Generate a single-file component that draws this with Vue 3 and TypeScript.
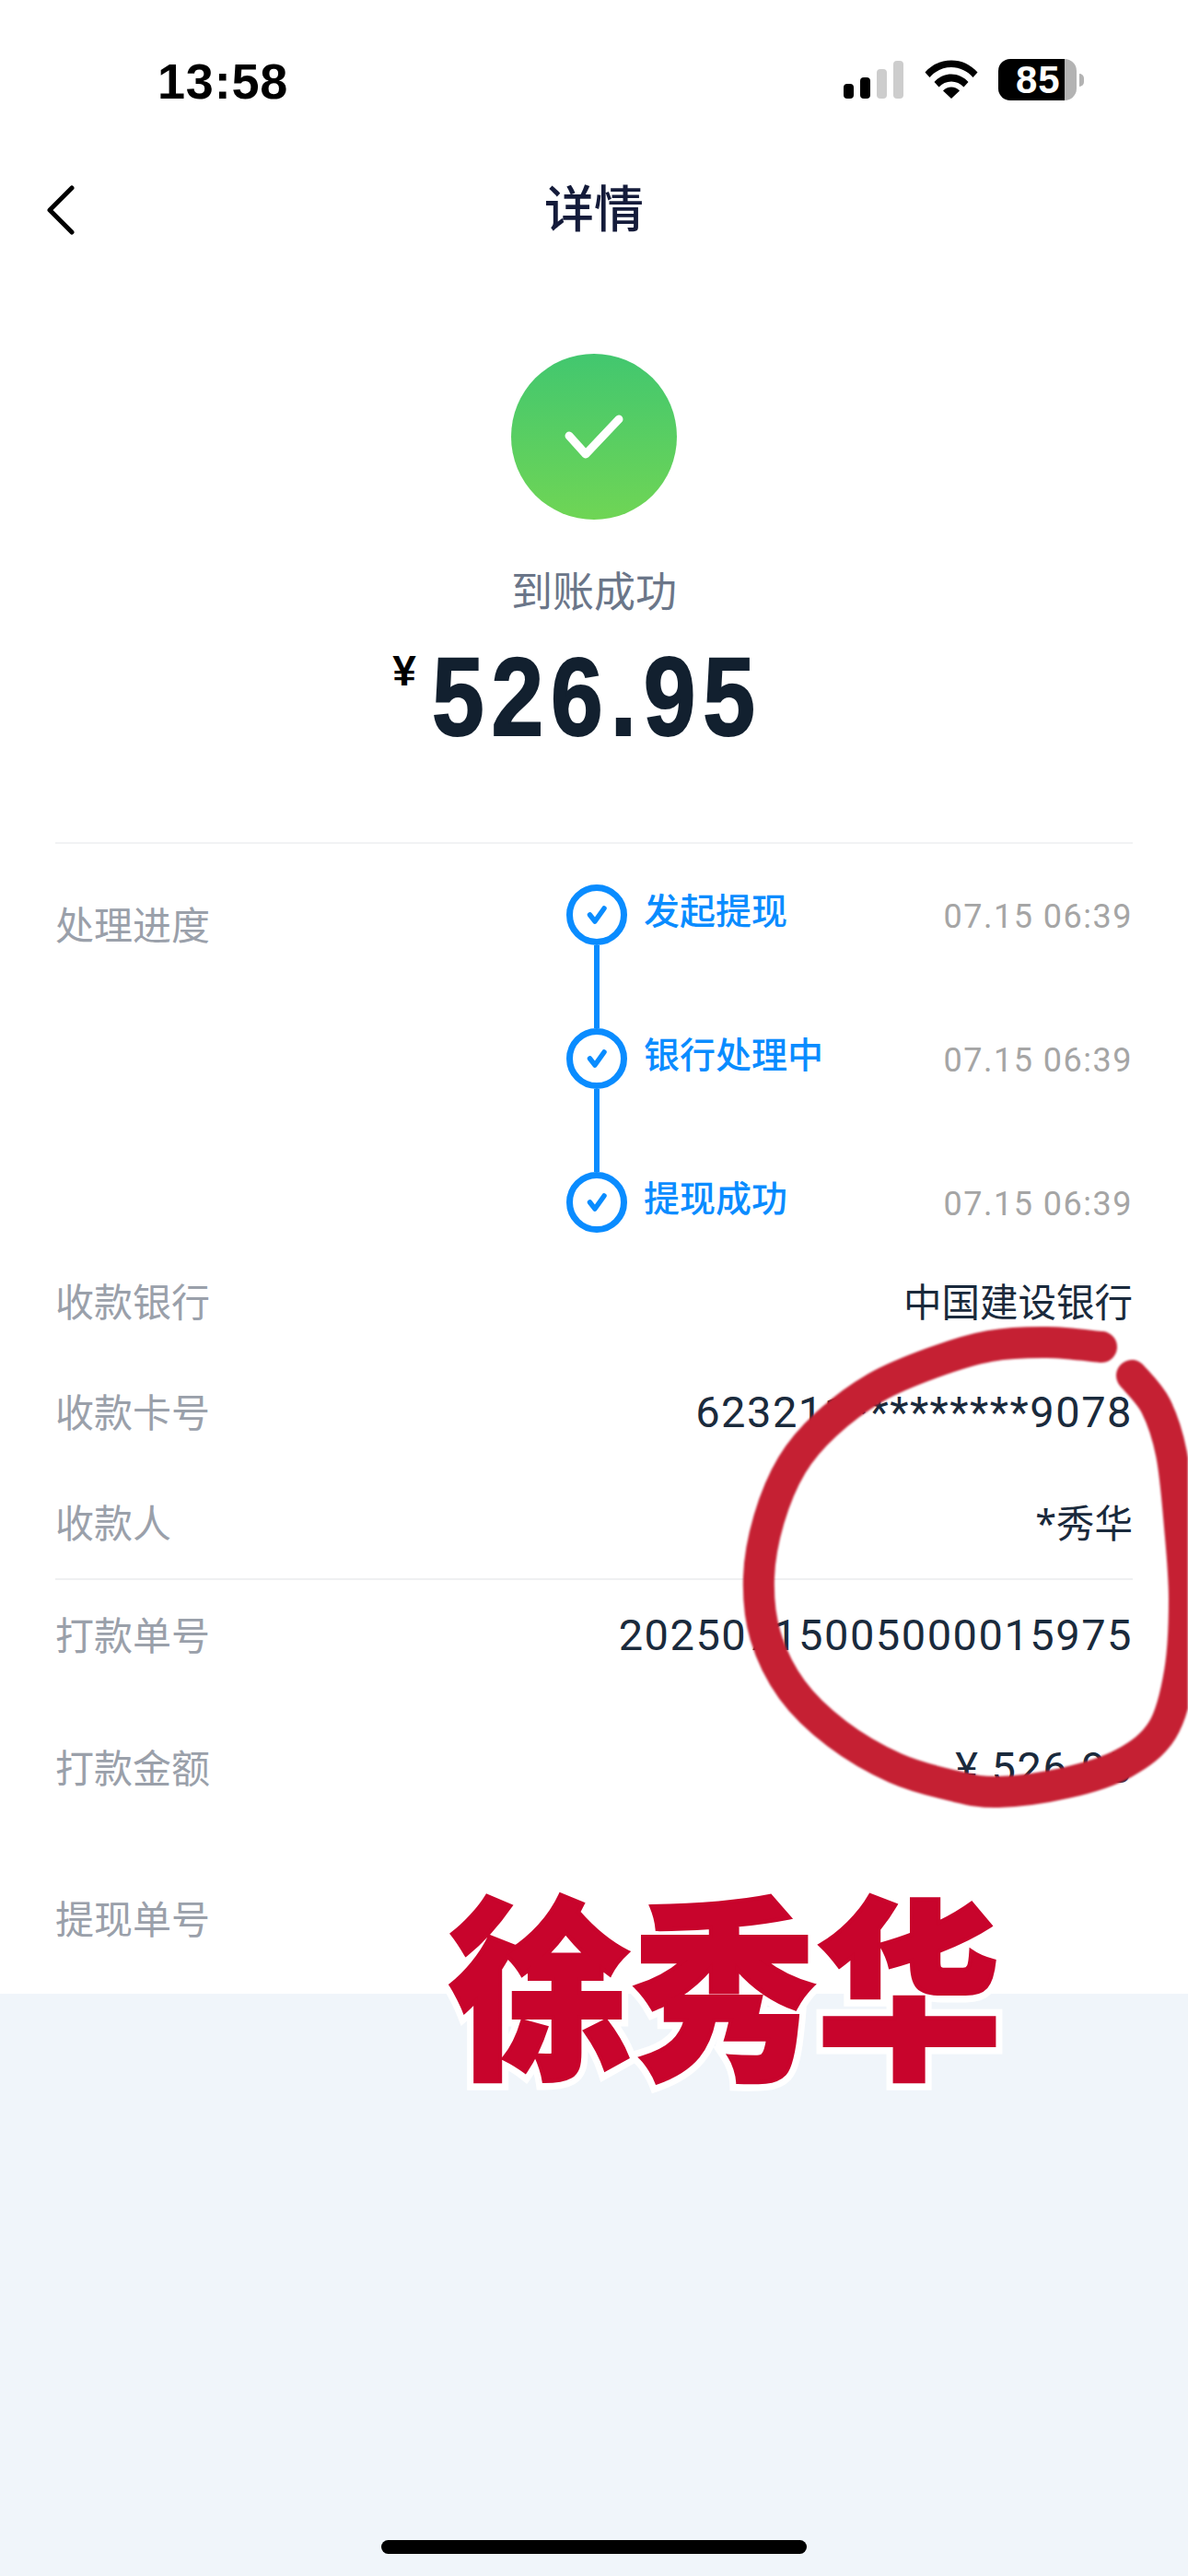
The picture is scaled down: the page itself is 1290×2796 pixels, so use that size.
<template>
  <div class="page">
    <div class="sheet">
      <!-- 状态栏 -->
      <div class="status-bar">
        <span class="clock">13:58</span>
        <div class="status-icons">
          <div class="signal">
            <i class="bar b1"></i>
            <i class="bar b2"></i>
            <i class="bar b3 off"></i>
            <i class="bar b4 off"></i>
          </div>
          <svg class="wifi" width="58" height="42" viewBox="0 0 58 42">
            <path d="M0.5 13.5C8 5 18 0.5 29 0.5S50 5 57.5 13.5L52.5 19C46.5 12 38 8 29 8S11.500 12 5.500 19Z" />
            <path d="M10.500 24C15.500 18.500 22 15.500 29 15.500S42.500 18.500 47.500 24L42.500 29.500C39 25.500 34 23.500 29 23.500S19 25.500 15.500 29.500Z" />
            <path d="M20 33.500C22.500 31 25.500 29.500 29 29.500S35.500 31 38 33.500L29 42Z" />
          </svg>
          <div class="battery">
            <div class="battery-body"><span>85</span></div>
            <i class="battery-tip"></i>
          </div>
        </div>
      </div>

      <!-- 导航 -->
      <div class="nav">
        <svg class="back" width="32" height="60" viewBox="0 0 32 60">
          <path d="M27 6 L3 30 L27 54" />
        </svg>
        <span class="nav-title">详情</span>
      </div>

      <!-- 金额 -->
      <div class="hero">
        <div class="ok-badge">
          <svg width="70" height="56" viewBox="0 0 70 56">
            <path d="M8 27 L26 47 L62 9" />
          </svg>
        </div>
        <p class="hero-state">到账成功</p>
        <div class="hero-amount">
          <span class="yen">¥</span>
          <span class="money">526.95</span>
        </div>
      </div>

      <div class="details">
        <div class="progress-row">
          <span class="label">处理进度</span>
          <div class="steps">
            <div v-for="(s, i) in steps" :key="s" class="step">
              <div class="step-mark">
                <svg width="66" height="66" viewBox="0 0 66 66">
                  <circle cx="33" cy="33" r="29.500" />
                  <path d="M25.500 33 L31 40 L41 26" />
                </svg>
                <i v-if="i < steps.length - 1" class="step-line"></i>
              </div>
              <span class="step-name">{{ s }}</span>
              <span class="step-time">07.15 06:39</span>
            </div>
          </div>
        </div>

        <div class="row r-bank">
          <span class="label">收款银行</span>
          <span class="value">中国建设银行</span>
        </div>
        <div class="row r-card">
          <span class="label">收款卡号</span>
          <span class="value num">623211*********9078</span>
        </div>
        <div class="row r-payee">
          <span class="label">收款人</span>
          <span class="value">*秀华</span>
        </div>
        <div class="row r-order">
          <span class="label">打款单号</span>
          <span class="value num">20250715005000015975</span>
        </div>
        <div class="row r-paid">
          <span class="label">打款金额</span>
          <span class="value num">¥ 526.95</span>
        </div>
        <div class="row r-draw">
          <span class="label">提现单号</span>
        </div>
      </div>
    </div>

    <div class="home-bar"></div>

    <!-- 截图上的红笔标注 -->
    <svg class="ink" width="1290" height="2796" viewBox="0 0 1290 2796">
      <path :d="inkPath" />
    </svg>
    <span class="stamp" data-text="徐秀华">徐秀华</span>
  </div>
</template>

<script setup lang="ts">
const steps: string[] = ['发起提现', '银行处理中', '提现成功']

// 红圈的中心线取点，再用 Catmull-Rom 连成平滑曲线
const inkPoints: [number, number][] = [
  [1196, 1462], [1137, 1457], [1075, 1461], [1013, 1479], [951, 1506], [897, 1546],
  [860, 1590], [835, 1649], [824, 1712], [831, 1775], [860, 1834], [909, 1882],
  [972, 1919], [1034, 1938], [1084, 1945], [1158, 1935], [1220, 1914], [1262, 1878],
  [1281, 1815], [1286, 1736], [1281, 1657], [1272, 1578], [1255, 1526], [1229, 1493],
]

const inkPath = inkPoints.reduce((d, p, i, a) => {
  if (i === 0) return `M${p[0]} ${p[1]}`
  const p0 = a[i - 2] ?? a[i - 1]
  const p1 = a[i - 1]
  const p3 = a[i + 1] ?? p
  const c1x = p1[0] + (p[0] - p0[0]) / 6
  const c1y = p1[1] + (p[1] - p0[1]) / 6
  const c2x = p[0] - (p3[0] - p1[0]) / 6
  const c2y = p[1] - (p3[1] - p1[1]) / 6
  return `${d}C${c1x} ${c1y} ${c2x} ${c2y} ${p[0]} ${p[1]}`
}, '')
</script>

<style>
html,
body {
  margin: 0;
  background: #f0f5fa;
}
</style>

<style scoped>
.page {
  position: relative;
  width: 1290px;
  height: 2796px;
  overflow: hidden;
  background: #f0f5fa;
  font-family: "Noto Sans", "Noto Sans CJK SC", sans-serif;
}

.sheet {
  height: 2164px;
  background: #fff;
}

.status-bar {
  height: 176px;
  box-sizing: border-box;
  padding: 58px 0 0 171px;
  display: flex;
  align-items: flex-start;
  justify-content: space-between;
}

.clock {
  font-family: "Liberation Sans", sans-serif;
  font-size: 54px;
  line-height: 60px;
  font-weight: 700;
  letter-spacing: 0.8px;
  color: #000;
}

.status-icons {
  display: flex;
  align-items: flex-start;
  padding: 6px 113px 0 0;
}

.signal {
  display: flex;
  align-items: flex-end;
  gap: 7px;
  height: 41px;
  margin-top: 2px;
  margin-right: 23px;
}

.bar {
  width: 11px;
  border-radius: 4px;
  background: #000;
}
.b1 { height: 16px; }
.b2 { height: 23px; }
.b3 { height: 32px; }
.b4 { height: 41px; }
.off { background: #cdcdcd; }

.wifi {
  margin-top: 1px;
  margin-right: 22px;
}
.wifi path { fill: #000; }

.battery {
  display: flex;
  align-items: center;
}

.battery-body {
  width: 85px;
  height: 45px;
  border-radius: 13px;
  background: linear-gradient(to right, #000 85%, #b3b3b3 85%);
  color: #fff;
  font-family: "Liberation Sans", sans-serif;
  font-size: 42px;
  font-weight: 700;
  line-height: 45px;
  letter-spacing: 1px;
  box-sizing: border-box;
  padding-left: 19px;
}

.battery-tip {
  width: 5px;
  height: 14px;
  margin-left: 3px;
  border-radius: 0 7px 7px 0;
  background: #b3b3b3;
}

.nav {
  position: relative;
  height: 100px;
  display: flex;
  align-items: center;
  justify-content: center;
}

.back {
  position: absolute;
  left: 51px;
  top: 22px;
  fill: none;
  stroke: #000;
  stroke-width: 5;
  stroke-linecap: round;
  stroke-linejoin: round;
}

.nav-title {
  font-size: 54px;
  font-weight: 500;
  color: #141b3a;
  line-height: 60px;
}

.hero {
  display: flex;
  flex-direction: column;
  align-items: center;
  padding-top: 108px;
}

.ok-badge {
  width: 180px;
  height: 180px;
  border-radius: 50%;
  background: linear-gradient(#42c76f, #6fd555);
  display: flex;
  align-items: center;
  justify-content: center;
}

.ok-badge svg {
  fill: none;
  stroke: #fff;
  stroke-width: 9;
  stroke-linecap: round;
  stroke-linejoin: round;
}

.hero-state {
  margin: 50px 0 0;
  font-size: 45px;
  line-height: 56px;
  color: #6b7689;
}

.hero-amount {
  display: flex;
  align-items: flex-start;
  margin: 21px 40px 0 0;
  height: 140px;
}

.yen {
  font-family: "Liberation Sans", sans-serif;
  font-size: 46px;
  line-height: 50px;
  font-weight: 700;
  color: #000;
  margin-right: 17px;
  margin-top: 12px;
}

.money {
  display: inline-block;
  width: 355px;
  font-family: "Liberation Sans", sans-serif;
  font-size: 120px;
  line-height: 130px;
  font-weight: 700;
  color: #12202f;
  letter-spacing: 9.200px;
  white-space: nowrap;
  -webkit-text-stroke: 2px #12202f;
  transform: scaleX(0.85);
  transform-origin: left center;
}

.details {
  margin: 83px 60px 0;
  border-top: 2px solid #f1f2f4;
}

.label {
  font-size: 42px;
  line-height: 56px;
  color: #9aa0aa;
  white-space: nowrap;
}

.progress-row {
  display: flex;
  justify-content: space-between;
  height: 437px;
  padding-top: 44px;
  box-sizing: border-box;
}
.progress-row .label {
  margin-top: 16px;
}

.steps {
  width: 615px;
}

.step {
  display: flex;
  align-items: flex-start;
  height: 156px;
}

.step-mark {
  position: relative;
  width: 66px;
  height: 66px;
  margin-right: 18px;
}

.step-mark svg {
  display: block;
  fill: none;
  stroke: #0a8cff;
}
.step-mark circle { stroke-width: 7; }
.step-mark path {
  stroke-width: 5.500;
  stroke-linecap: round;
  stroke-linejoin: round;
}

.step-line {
  position: absolute;
  left: 30px;
  top: 66px;
  width: 6px;
  height: 90px;
  background: #0a8cff;
}

.step-name {
  font-size: 39px;
  line-height: 56px;
  font-weight: 500;
  color: #0a8cff;
}

.step-time {
  margin-left: auto;
  font-family: Roboto, sans-serif;
  font-size: 36px;
  line-height: 50px;
  letter-spacing: 1.500px;
  color: #a5a5a5;
  margin-top: 10px;
}

.row {
  display: flex;
  justify-content: space-between;
  align-items: center;
}

.value {
  font-size: 41.500px;
  line-height: 56px;
  color: #1a2a3c;
  white-space: nowrap;
}

.value.num {
  font-family: Roboto, sans-serif;
  font-size: 47px;
  letter-spacing: 1.500px;
}

.r-bank { height: 120px; }
.r-card { height: 120px; }
.r-payee { height: 120px; border-bottom: 2px solid #eff0f2; }
.r-order { height: 120px; }
.r-paid { height: 168px; }
.r-draw { height: 159px; }

.home-bar {
  position: absolute;
  left: 414px;
  bottom: 24px;
  width: 462px;
  height: 15px;
  border-radius: 8px;
  background: #000;
}

.ink {
  position: absolute;
  left: 0;
  top: 0;
  fill: none;
  stroke: #c52033;
  stroke-width: 34;
  stroke-linecap: round;
  stroke-linejoin: round;
  filter: blur(1px);
}

.stamp {
  position: absolute;
  left: 487px;
  top: 2009px;
  font-family: "Noto Sans CJK SC", sans-serif;
  font-size: 200px;
  line-height: 260px;
  font-weight: 900;
  color: #c8042c;
  -webkit-text-stroke: 4px #c8042c;
  white-space: nowrap;
  transform: scaleY(1.06);
  transform-origin: left top;
  isolation: isolate;
}

/* 白色描边垫在红字下面 */
.stamp::before {
  content: attr(data-text);
  position: absolute;
  left: 0;
  top: 0;
  z-index: -1;
  color: #fff;
  -webkit-text-stroke: 18px #fff;
}
</style>
